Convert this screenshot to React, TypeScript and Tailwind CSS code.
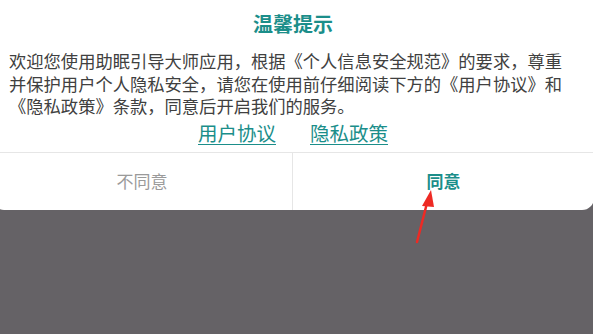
export default function App() {
  const font = { fontFamily: '"Noto Sans CJK SC", "Noto Sans", sans-serif' };
  return (
    <div className="relative w-[593px] h-[334px] overflow-hidden bg-[#656266]" style={font}>
      {/* Dialog card */}
      <div className="ml-[-8px] w-[602px] bg-white rounded-b-[12px] flex flex-col">
        <div className="pt-[10px] text-center text-[20px] leading-[28px] font-bold text-[#1b8e8a]">
          温馨提示
        </div>
        <div className="mt-[12px] pl-[17px] text-[17.3px] leading-[22.5px] text-[#404040] whitespace-nowrap">
          <div>欢迎您使用助眠引导大师应用，根据《个人信息安全规范》的要求，尊重</div>
          <div>并保护用户个人隐私安全，请您在使用前仔细阅读下方的《用户协议》和</div>
          <div>《隐私政策》条款，同意后开启我们的服务。</div>
        </div>
        <div className="mt-[2px] pb-[6px] flex justify-center gap-[34px] text-[19.5px] leading-[26px] text-[#1b8e8a]">
          <span className="underline underline-offset-[3px]">用户协议</span>
          <span className="underline underline-offset-[3px]">隐私政策</span>
        </div>
        <div className="flex h-[58px] border-t border-[#e6e6e6]">
          <div className="w-[301px] flex items-center justify-center text-[17px] text-[#9a9a9a] border-r border-[#e6e6e6]">
            不同意
          </div>
          <div className="flex-1 flex items-center justify-center text-[17px] font-bold text-[#1b8e8a]">
            同意
          </div>
        </div>
      </div>

      {/* Red annotation arrow */}
      <svg className="absolute left-0 top-0" width="593" height="334" viewBox="0 0 593 334">
        <line x1="417" y1="242" x2="427" y2="203" stroke="#ee2a24" strokeWidth="2.5" strokeLinecap="round" />
        <polygon points="431,190 422,206 434,207" fill="#ee2a24" />
      </svg>
    </div>
  );
}
